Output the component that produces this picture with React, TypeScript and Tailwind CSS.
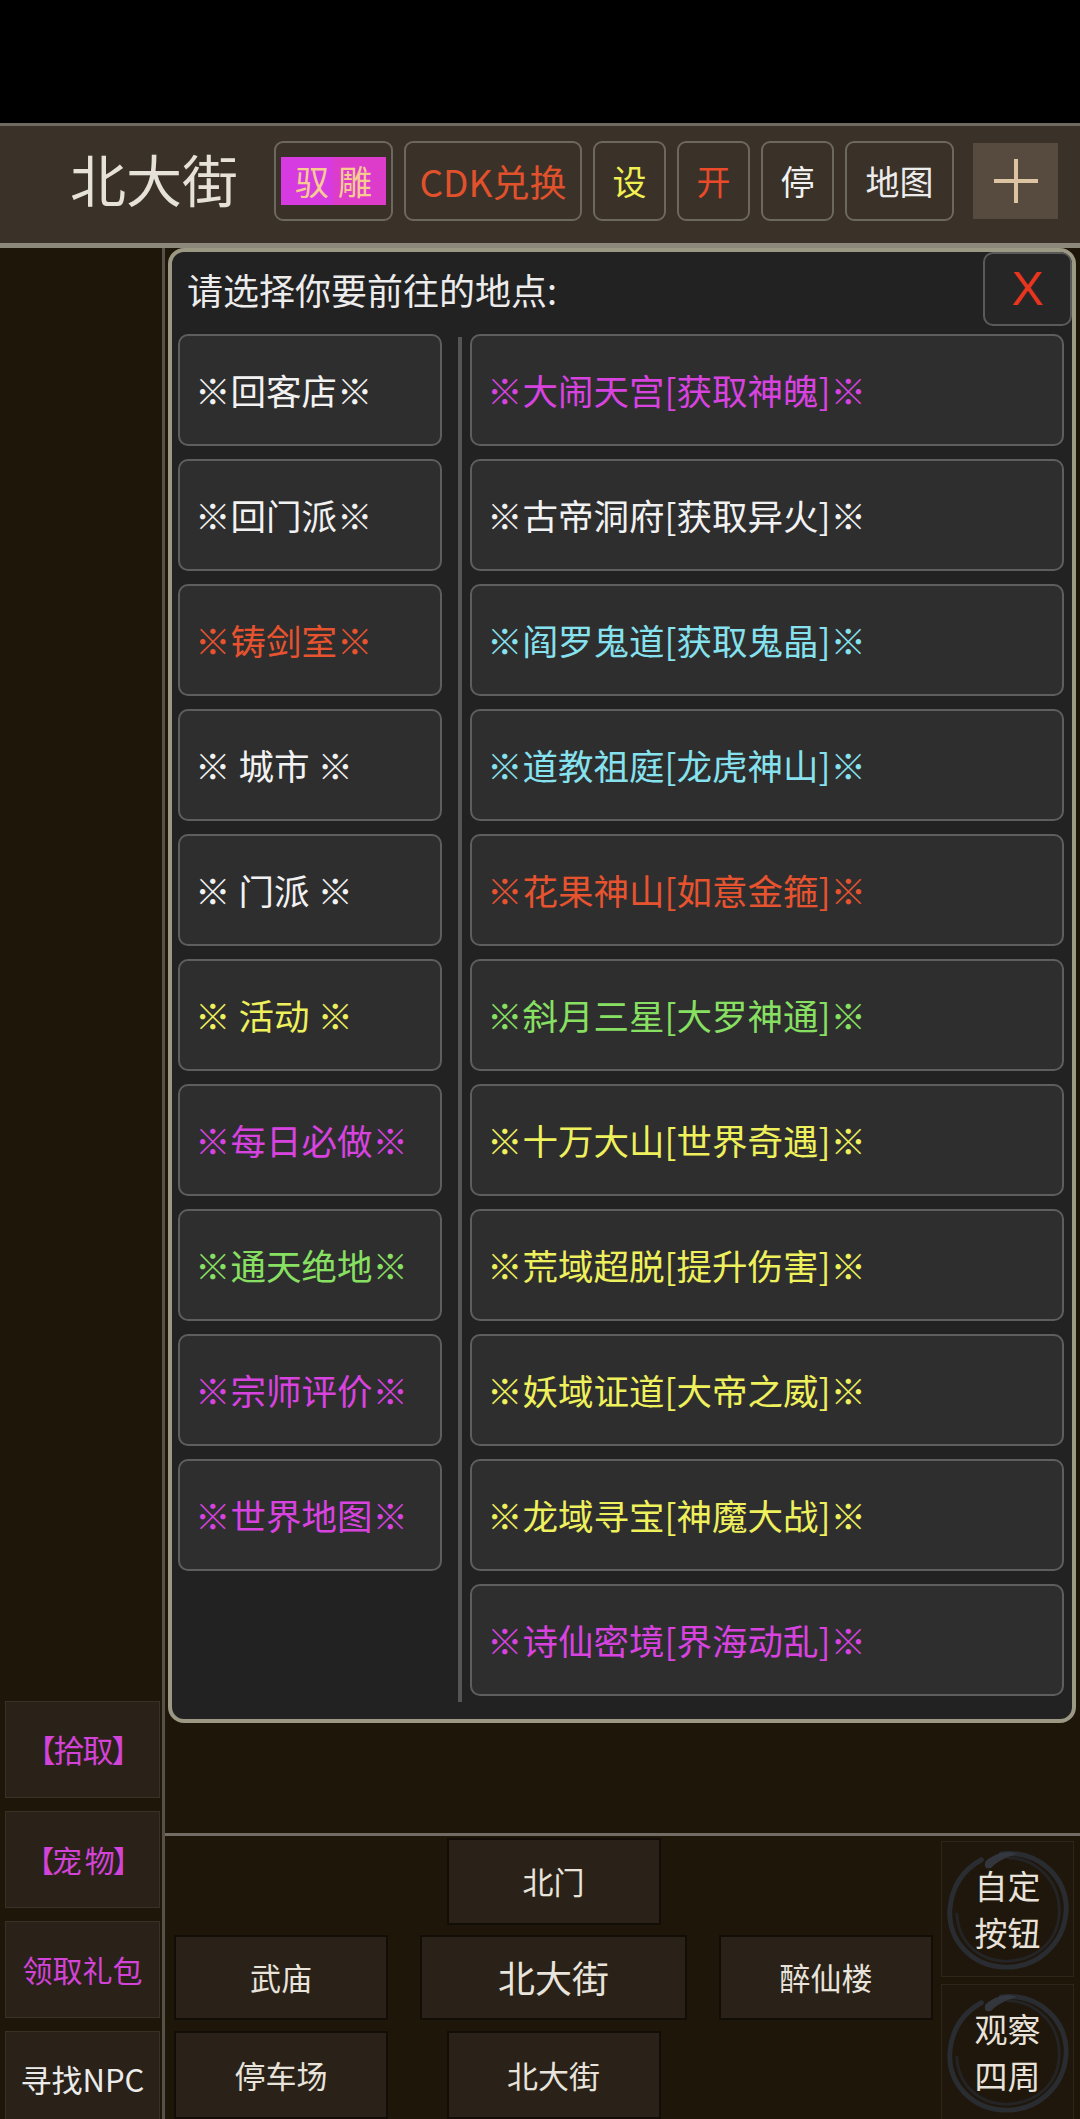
import React from "react";

const FONT = "font-['Noto_Sans_CJK_SC','Noto_Sans','DejaVu_Sans',sans-serif]";

const leftItems: { t: string; c: string }[] = [
  { t: "※回客店※", c: "text-[#f2f2f2]" },
  { t: "※回门派※", c: "text-[#f2f2f2]" },
  { t: "※铸剑室※", c: "text-[#e8532f]" },
  { t: "※ 城市 ※", c: "text-[#f2f2f2]" },
  { t: "※ 门派 ※", c: "text-[#f2f2f2]" },
  { t: "※ 活动 ※", c: "text-[#eef05c]" },
  { t: "※每日必做※", c: "text-[#d843e0]" },
  { t: "※通天绝地※", c: "text-[#88e062]" },
  { t: "※宗师评价※", c: "text-[#d843e0]" },
  { t: "※世界地图※", c: "text-[#d843e0]" },
];

const rightItems: { t: string; c: string }[] = [
  { t: "※大闹天宫[获取神魄]※", c: "text-[#d843e0]" },
  { t: "※古帝洞府[获取异火]※", c: "text-[#f2f2f2]" },
  { t: "※阎罗鬼道[获取鬼晶]※", c: "text-[#86e2ee]" },
  { t: "※道教祖庭[龙虎神山]※", c: "text-[#86e2ee]" },
  { t: "※花果神山[如意金箍]※", c: "text-[#e8532f]" },
  { t: "※斜月三星[大罗神通]※", c: "text-[#88e062]" },
  { t: "※十万大山[世界奇遇]※", c: "text-[#eef05c]" },
  { t: "※荒域超脱[提升伤害]※", c: "text-[#eef05c]" },
  { t: "※妖域证道[大帝之威]※", c: "text-[#eef05c]" },
  { t: "※龙域寻宝[神魔大战]※", c: "text-[#eef05c]" },
  { t: "※诗仙密境[界海动乱]※", c: "text-[#d843e0]" },
];

function Ring() {
  return (
    <svg
      className="absolute inset-0 w-full h-full pointer-events-none"
      viewBox="0 0 133 136"
      fill="none"
    >
      <path
        d="M60 12 C 100 8, 128 38, 126 70 C 124 105, 95 128, 64 127 C 30 126, 6 100, 8 68 C 10 45, 22 28, 40 18"
        stroke="#2c3038"
        strokeWidth="5"
        strokeLinecap="round"
        opacity="0.85"
      />
      <path
        d="M66 16 C 98 16, 120 42, 119 72 C 118 100, 96 120, 66 121 C 36 121, 16 100, 15 72"
        stroke="#262a31"
        strokeWidth="3"
        opacity="0.7"
      />
      <path
        d="M44 20 C 52 12, 66 8, 76 12 C 70 14, 58 18, 50 26 C 46 28, 42 26, 44 20 Z"
        fill="#353a43"
        opacity="0.9"
      />
    </svg>
  );
}

function NavBtn({
  children,
  className = "",
}: {
  children: React.ReactNode;
  className?: string;
}) {
  return (
    <div
      className={
        "h-full bg-[#2a2218] border-2 border-[#120d07] flex items-center justify-center text-[#e8e4dc] " +
        className
      }
    >
      {children}
    </div>
  );
}

export default function App() {
  return (
    <div
      className={
        "w-[1080px] h-[2119px] bg-black flex flex-col overflow-hidden " + FONT
      }
    >
      {/* status bar area */}
      <div className="h-[123px] shrink-0 bg-black" />

      {/* header */}
      <header className="h-[125px] shrink-0 bg-[#3a3128] border-t-[3px] border-t-[#6e6a62] border-b-[5px] border-b-[#8c887c] flex items-start pt-[15px]">
        <div className="ml-[70px] w-[204px] h-[80px] flex items-center text-[56px] leading-none text-[#e6e2da] -mt-[3px]">
          北大街
        </div>
        <div className="flex items-start gap-[11px]">
          <div className="w-[119px] h-[80px] rounded-[9px] border-2 border-[#6c675f] flex items-center justify-center">
            <div className="w-[105px] h-[48px] flex text-[34px] leading-none text-[#f6cc92]">
              <div className="flex-1 bg-[#d63be2] flex items-center justify-end pr-[4px]">
                驭
              </div>
              <div className="flex-1 bg-[#dd3ccb] flex items-center justify-start pl-[5px]">
                雕
              </div>
            </div>
          </div>
          <div className="w-[178px] h-[80px] rounded-[9px] border-2 border-[#6c675f] flex items-center justify-center text-[37px] leading-none text-[#e0512c]">
            CDK兑换
          </div>
          <div className="w-[73px] h-[80px] rounded-[9px] border-2 border-[#6c675f] flex items-center justify-center text-[34px] leading-none text-[#f0f052]">
            设
          </div>
          <div className="w-[73px] h-[80px] rounded-[9px] border-2 border-[#6c675f] flex items-center justify-center text-[34px] leading-none text-[#e84a2a]">
            开
          </div>
          <div className="w-[73px] h-[80px] rounded-[9px] border-2 border-[#6c675f] flex items-center justify-center text-[34px] leading-none text-[#f2f2f2]">
            停
          </div>
          <div className="w-[109px] h-[80px] rounded-[9px] border-2 border-[#6c675f] flex items-center justify-center text-[34px] leading-none text-[#ececec]">
            地图
          </div>
          <div className="ml-[8px] mt-[2px] w-[85px] h-[76px] bg-[#564b3e] flex items-center justify-center">
            <svg width="44" height="44" viewBox="0 0 44 44">
              <rect x="20" y="0" width="4" height="44" fill="#dcc3a2" />
              <rect x="0" y="20" width="44" height="4" fill="#dcc3a2" />
            </svg>
          </div>
        </div>
      </header>

      {/* body */}
      <div className="flex-1 min-h-0 flex bg-[#1e1609]">
        {/* left panel */}
        <aside className="w-[165px] shrink-0 border-r-[3px] border-r-[#56524a] flex flex-col gap-[13px] pt-[1453px] pl-[5px] pr-[2px] overflow-hidden">
          <div className="h-[97px] shrink-0 bg-[#2a2218] border border-[#3a3126] flex items-center justify-center text-[31px] tracking-[-2px] text-[#d343d8]">
            【拾取】
          </div>
          <div className="h-[97px] shrink-0 bg-[#2a2218] border border-[#3a3126] flex items-center justify-center text-[30px] tracking-[-2px] text-[#d343d8] whitespace-pre">
            【宠 物】
          </div>
          <div className="h-[97px] shrink-0 bg-[#2a2218] border border-[#3a3126] flex items-center justify-center text-[30px] text-[#d343d8]">
            领取礼包
          </div>
          <div className="h-[97px] shrink-0 bg-[#2a2218] border border-[#3a3126] flex items-center justify-center text-[31px] text-[#ececec]">
            寻找NPC
          </div>
        </aside>

        {/* main */}
        <main className="flex-1 min-w-0 flex flex-col">
          {/* dialog */}
          <div className="ml-[3px] mr-[4px] h-[1475px] shrink-0 border-4 border-[#9b9884] rounded-[16px] bg-[#222222] flex flex-col overflow-hidden">
            <div className="h-[82px] shrink-0 flex items-start justify-between">
              <div className="pl-[15px] h-[74px] flex items-center text-[36px] leading-none text-[#ececec]">
                请选择你要前往的地点:
              </div>
              <div className="w-[89px] h-[74px] rounded-[10px] border-2 border-[#5a5a5a] bg-[#262626] flex items-center justify-center text-[48px] leading-none text-[#e8351e] font-['Liberation_Sans',sans-serif] font-light">
                X
              </div>
            </div>
            <div className="flex pl-[6px]">
              <div className="w-[264px] flex flex-col gap-[13px]">
                {leftItems.map((it, i) => (
                  <div
                    key={i}
                    className={
                      "h-[112px] rounded-[10px] border-2 border-[#5e5e5e] bg-[#2e2e2e] flex items-center pl-[15px] text-[35.5px] leading-none whitespace-pre " +
                      it.c
                    }
                  >
                    {it.t}
                  </div>
                ))}
              </div>
              <div className="ml-[16px] mt-[3px] w-[4px] h-[1365px] bg-[#555555]" />
              <div className="ml-[8px] w-[594px] flex flex-col gap-[13px]">
                {rightItems.map((it, i) => (
                  <div
                    key={i}
                    className={
                      "h-[112px] rounded-[10px] border-2 border-[#5e5e5e] bg-[#2e2e2e] flex items-center pl-[15px] text-[35.5px] leading-none whitespace-pre " +
                      it.c
                    }
                  >
                    {it.t}
                  </div>
                ))}
              </div>
            </div>
          </div>

          {/* empty space */}
          <div className="h-[110px] shrink-0" />
          <div className="h-[3px] shrink-0 bg-[#716d64]" />

          {/* nav area */}
          <div className="flex-1 min-h-0 flex">
            <div className="pl-[9px] pt-[2px] flex flex-col gap-[10px]">
              <div className="h-[89px] grid grid-cols-[214px_267px_214px] gap-x-[32px]">
                <div />
                <div className="w-[214px] justify-self-center">
                  <NavBtn className="text-[31px]">北门</NavBtn>
                </div>
                <div />
              </div>
              <div className="h-[88px] grid grid-cols-[214px_267px_214px] gap-x-[32px]">
                <NavBtn className="text-[31px]">武庙</NavBtn>
                <NavBtn className="text-[37px]">北大街</NavBtn>
                <NavBtn className="text-[31px]">醉仙楼</NavBtn>
              </div>
              <div className="h-[90px] mt-[1px] grid grid-cols-[214px_267px_214px] gap-x-[32px]">
                <NavBtn className="text-[31px]">停车场</NavBtn>
                <div className="w-[214px] h-full justify-self-center">
                  <NavBtn className="text-[31px]">北大街</NavBtn>
                </div>
                <div />
              </div>
            </div>
            <div className="ml-[8px] w-[133px] pt-[5px] flex flex-col gap-[7px]">
              <div className="relative h-[136px] shrink-0 bg-[#1f170b] border border-[#2e261b] flex flex-col items-center justify-center text-[33px] leading-[47px] text-[#e8e2da]">
                <Ring />
                <span className="relative">自定</span>
                <span className="relative">按钮</span>
              </div>
              <div className="relative h-[136px] shrink-0 bg-[#1f170b] border border-[#2e261b] flex flex-col items-center justify-center text-[33px] leading-[47px] text-[#e8e2da]">
                <Ring />
                <span className="relative">观察</span>
                <span className="relative">四周</span>
              </div>
            </div>
          </div>
        </main>
      </div>
    </div>
  );
}
